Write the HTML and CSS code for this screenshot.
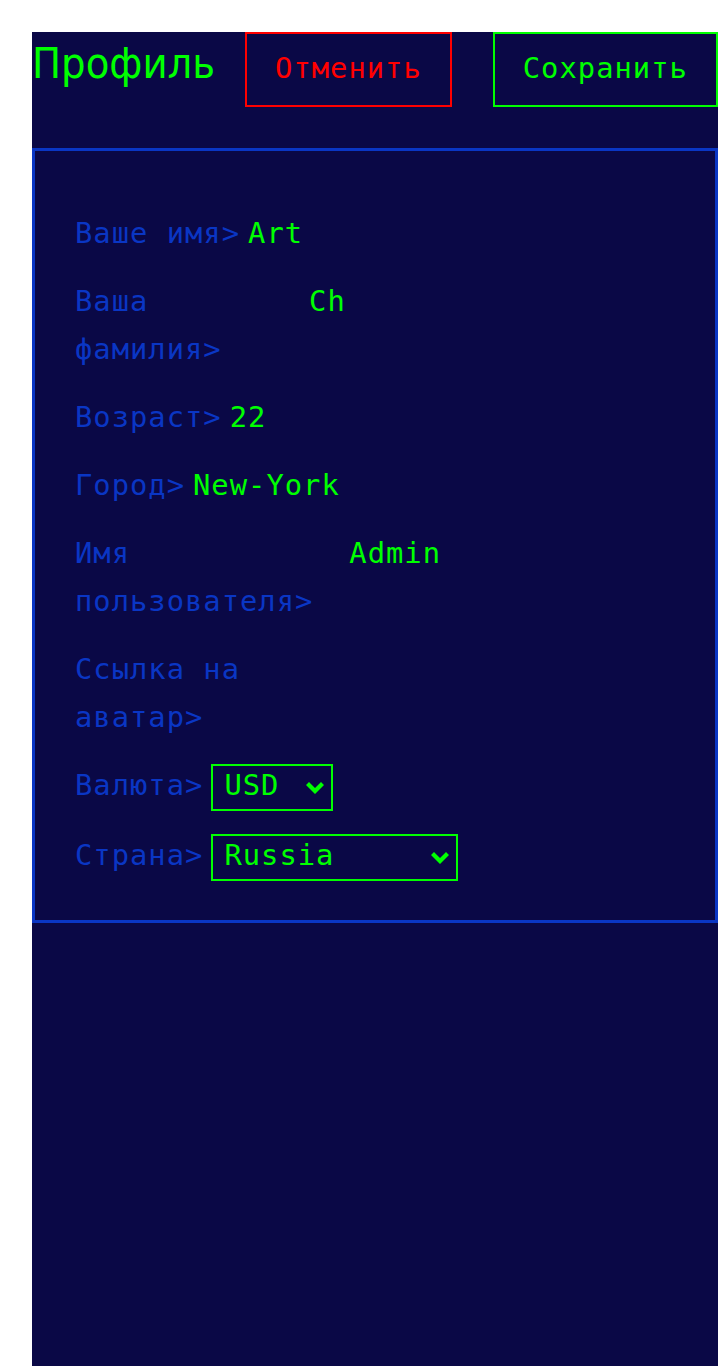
FILE: index.html
```html
<!DOCTYPE html>
<html lang="ru">
<head>
<meta charset="utf-8">
<title>Профиль</title>
<link rel="stylesheet" href="styles.css">
</head>
<body>
<main class="page">
  <header class="topbar">
    <h1 class="title">Профиль</h1>
    <button class="btn btn-cancel" type="button">Отменить</button>
    <button class="btn btn-save" type="button">Сохранить</button>
  </header>
  <form class="profile">
    <div class="row"><label class="label">Ваше имя&gt;</label><input class="field" type="text" value="Art"></div>
    <div class="row"><label class="label">Ваша фамилия&gt;</label><input class="field" type="text" value="Ch"></div>
    <div class="row"><label class="label">Возраст&gt;</label><input class="field" type="text" value="22"></div>
    <div class="row"><label class="label">Город&gt;</label><input class="field" type="text" value="New-York"></div>
    <div class="row"><label class="label">Имя пользователя&gt;</label><input class="field" type="text" value="Admin"></div>
    <div class="row"><label class="label">Ссылка на аватар&gt;</label><input class="field" type="text" value=""></div>
    <div class="row">
      <label class="label">Валюта&gt;</label>
      <span class="select-wrap">
        <select class="select select-currency"><option>USD</option><option>EUR</option><option>RUB</option></select>
        <svg class="chevron" width="18" height="12" viewBox="0 0 18 12" aria-hidden="true"><path d="M0 3 L3 0 L9 6 L15 0 L18 3 L9 12 Z"/></svg>
      </span>
    </div>
    <div class="row">
      <label class="label">Страна&gt;</label>
      <span class="select-wrap">
        <select class="select select-country"><option>Russia</option><option>USA</option><option>Germany</option></select>
        <svg class="chevron" width="18" height="12" viewBox="0 0 18 12" aria-hidden="true"><path d="M0 3 L3 0 L9 6 L15 0 L18 3 L9 12 Z"/></svg>
      </span>
    </div>
  </form>
</main>
</body>
</html>
```
FILE: styles.css
```css
html, body {
  margin: 0;
  padding: 0;
  background: #ffffff;
}

.page {
  margin: 32px 0 0 32px;
  min-height: 1334px;
  background: #0a0846;
}

.topbar {
  display: flex;
  align-items: baseline;
}

.title {
  margin: 0 30px 0 0;
  font-family: "DejaVu Sans Condensed", "DejaVu Sans", sans-serif;
  font-stretch: condensed;
  font-weight: normal;
  font-size: 43px;
  line-height: 1.164;
  color: #00ff00;
}

.btn {
  box-sizing: border-box;
  height: 75px;
  padding: 11px 28px 13px;
  background: transparent;
  font-family: "DejaVu Sans Mono", monospace;
  font-size: 28.8px;
  letter-spacing: 1px;
  line-height: 47px;
  cursor: pointer;
}

.btn-cancel {
  border: 2px solid #ff0000;
  color: #ff0000;
}

.btn-save {
  margin-left: 41px;
  border: 2px solid #00ff00;
  color: #00ff00;
}

.profile {
  margin-top: 41px;
  border: 3px solid #0a36c4;
  padding: 58px 0 39px 40px;
  display: flex;
  flex-direction: column;
  gap: 20px;
}

.row {
  display: flex;
  align-items: baseline;
}

.label,
.field,
.select {
  font-family: "DejaVu Sans Mono", monospace;
  font-size: 28.8px;
  letter-spacing: 1px;
}

.label {
  flex: 0 1 auto;
  margin-right: 8px;
  line-height: 48px;
  color: #0a36c4;
}

.field {
  flex: 0 1 428px;
  min-width: 0;
  width: 428px;
  height: 48px;
  padding: 0;
  border: none;
  outline: none;
  background: transparent;
  color: #00ff00;
}

.select-wrap {
  position: relative;
  display: inline-flex;
  color: #00ff00;
}

.select {
  box-sizing: border-box;
  height: 47px;
  padding: 0 0 5px 11px;
  border: 2px solid #00ff00;
  border-radius: 0;
  -webkit-appearance: none;
  appearance: none;
  background-color: #0a0846;
  color: #00ff00;
}

.select-currency {
  width: 122px;
}

.select-country {
  width: 247px;
}

.chevron {
  position: absolute;
  right: 9px;
  top: 18px;
  fill: currentColor;
  pointer-events: none;
}
```
